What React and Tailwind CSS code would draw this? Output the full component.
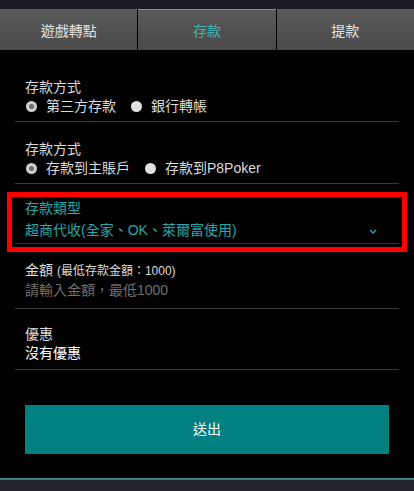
const font = {
  fontFamily: '"Liberation Sans", "Noto Sans CJK TC", sans-serif',
};

function Radio({ checked }) {
  return checked ? (
    <span className="flex h-[11px] w-[11px] shrink-0 items-center justify-center rounded-full bg-[#cfcfcf]">
      <span className="h-[5px] w-[5px] rounded-full bg-[#6e6e6e]" />
    </span>
  ) : (
    <span className="block h-[11px] w-[11px] shrink-0 rounded-full bg-[#e2e2e2]" />
  );
}

function RadioRow({ options }) {
  return (
    <div className="flex h-[19px] items-center">
      {options.map((o, i) => (
        <label key={o.label} className={"flex items-center " + (i > 0 ? "ml-[14px]" : "")}>
          <span className="ml-[1px] flex">
            <Radio checked={o.checked} />
          </span>
          <span className="ml-[9px] text-[14px] leading-[19px] text-[#dcdcdc]">{o.label}</span>
        </label>
      ))}
    </div>
  );
}

export default function App() {
  return (
    <div className="flex h-[491px] w-[414px] flex-col bg-black" style={font}>
      <div className="h-[9px] bg-[#1c1b24]" />

      <div className="flex h-[41px] gap-px bg-black">
        <div className="flex flex-1 items-center justify-center bg-gradient-to-b from-[#5a5a5a] to-[#4a4a4a] pt-[3px] text-[14px] text-[#e2e2e2]">
          遊戲轉點
        </div>
        <div className="flex flex-1 items-center justify-center border-t border-[#34b4b4] bg-gradient-to-b from-[#5a5a5a] to-[#4a4a4a] pt-[2px] text-[14px] text-[#3eb2b2]">
          存款
        </div>
        <div className="flex flex-1 items-center justify-center bg-gradient-to-b from-[#5a5a5a] to-[#4a4a4a] pt-[3px] text-[14px] text-[#e2e2e2]">
          提款
        </div>
      </div>

      <main className="flex-1 pt-[10px]">
        <div className="mx-[15px] border-b border-[#3a3a3a] px-[10px] pb-[5px] pt-[18px]">
          <div className="text-[14px] leading-[19px] text-[#d8d8d8]">存款方式</div>
          <RadioRow
            options={[
              { label: "第三方存款", checked: true },
              { label: "銀行轉帳", checked: false },
            ]}
          />
        </div>

        <div className="mx-[15px] border-b border-[#3a3a3a] px-[10px] pb-[5px] pt-[18px]">
          <div className="text-[14px] leading-[19px] text-[#d8d8d8]">存款方式</div>
          <RadioRow
            options={[
              { label: "存款到主賬戶", checked: true },
              { label: "存款到P8Poker", checked: false },
            ]}
          />
        </div>

        <div className="relative">
          <div className="mx-[15px] border-b border-[#2e2e2e] px-[10px] pb-[3px] pt-[15px]">
            <div className="text-[14px] leading-[19px] text-[#2aa6a6]">存款類型</div>
            <div className="mt-[3px] flex items-center justify-between pr-[12px]">
              <span className="text-[14px] leading-[19px] text-[#2aa6a6]">超商代收(全家、OK、萊爾富使用)</span>
              <svg width="8" height="6" viewBox="0 0 8 6" className="mt-[3px]">
                <polyline points="1,1 4,4 7,1" fill="none" stroke="#2aa6a6" strokeWidth="1.3" />
              </svg>
            </div>
          </div>
          <div className="pointer-events-none absolute left-[7px] right-[7px] top-[8px] h-[60px] border-[5px] border-[#ff0000]" />
        </div>

        <div className="mx-[15px] border-b border-[#3a3a3a] px-[10px] pb-[8px] pt-[17px]">
          <div className="text-[14px] leading-[19px] text-[#dcdcdc]">
            金額 <span className="text-[12px]">(最低存款金額：1000)</span>
          </div>
          <div className="text-[14px] leading-[19px] text-[#6f6f6f]">請輸入金額，最低1000</div>
        </div>

        <div className="mx-[15px] border-b border-[#3a3a3a] px-[10px] pb-[6px] pt-[16px]">
          <div className="text-[14px] leading-[19px] text-[#dcdcdc]">優惠</div>
          <div className="text-[14px] leading-[19px] text-white">沒有優惠</div>
        </div>

        <button className="mx-[25px] mt-[35px] flex h-[49px] w-[364px] items-center justify-center bg-[#008080] text-[14px] text-white">
          送出
        </button>
      </main>

      <div className="h-[2px] bg-[#3b8484]" />
      <div className="h-[11px] bg-[#24222c]" />
    </div>
  );
}
